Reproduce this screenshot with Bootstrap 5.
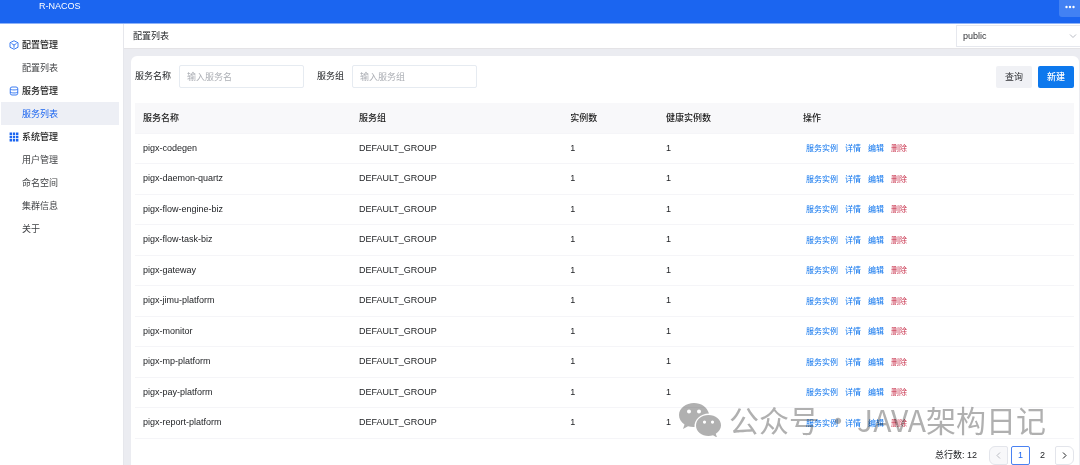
<!DOCTYPE html>
<html lang="zh-CN">
<head>
<meta charset="utf-8">
<meta name="viewport" content="width=device-width, initial-scale=1">
<title>R-NACOS</title>
<link href="https://cdn.jsdelivr.net/npm/bootstrap@5.3.0/dist/css/bootstrap.min.css" rel="stylesheet">
<style>
  body { font-family: "Liberation Sans", "Noto Sans CJK SC", sans-serif; font-size: 9px; line-height: 15px; color: #222427; background: #ebecf1; }
  .app { min-height: 100vh; }
  .topbar { height: 24px; background: #1b65f0; border-bottom: 1px solid #8db2f8; }
  .brand { padding-left: 39px; line-height: 13px; color: #fff; }
  .more-btn { width: 21px; height: 17px; background: #4281f3; border: 0; border-radius: 0 0 0 3px; }
  .more-btn svg { margin-bottom: 3px; }
  .sidebar { width: 123px; background: #fff; padding-top: 9px; }
  .sidebar .nav-link { height: 23px; padding: 1px 0 0 21px; margin: 0 4px 0 1px; color: #404245; display: flex; align-items: center; }
  .sidebar .group-title { height: 23px; padding: 1px 0 0 9px; color: #1c1c1c; gap: 3px; font-weight: 500; }
  .sidebar .nav-link.active { background: #edeff5; color: #1b65f0; }
  .content-area { min-width: 0; border-left: 1px solid #e6e7ec; }
  .titlebar { height: 25px; background: #fff; padding-left: 9px; border-bottom: 1px solid #e4e3e6; }
  .ns-select { width: 124px; height: 22px; padding: 0 0 0 6px; font-size: 9px; line-height: 20px; border: 1px solid #e6e8ee; border-right: 0; border-radius: 0; color: #303236; background-size: 8px; background-position: right 3px center; background-image: url("data:image/svg+xml,%3Csvg xmlns='http://www.w3.org/2000/svg' viewBox='0 0 16 16'%3E%3Cpath fill='none' stroke='%23b9bcc4' stroke-width='2' d='M2 5l6 6 6-6'/%3E%3C/svg%3E"); }
  .panel { background: #fff; margin: 7px 1px 0 7px; padding: 9px 5px 0 4px; border-radius: 6px 6px 0 0; }
  .filter-input { width: 125px; height: 23px; padding: 0 7px; font-size: 9px; border: 1px solid #e6ebf1; border-radius: 2px; }
  .filter-input::placeholder { color: #acafb5; opacity: 1; }
  .filter-second { margin-left: 13px; }
  .tool-group { gap: 6px; }
  .tool-btn { width: 36px; height: 22px; padding: 0; font-size: 9px; line-height: 20px; border-radius: 2px; }
  .btn-query { background: #f0f1f5; color: #303236; }
  .btn-create { background: #0d78ed; color: #fff; font-weight: 500; }
  .service-table { margin: 15px 0 0; table-layout: fixed; color: #222427; }
  .service-table th, .service-table td { height: 30px; padding: 0 8px; vertical-align: middle; border-bottom: 1px solid #f5f5f8; color: inherit; }
  .service-table tbody tr:nth-child(even) td { height: 31px; }
  .service-table th { padding-top: 2px; background: #f8f8fa; font-weight: 500; color: #1c1c1c; }
  .c-name { width: 23%; } .c-group { width: 22.5%; } .c-num { width: 10.2%; } .c-ok { width: 14.6%; }
  .row-actions { gap: 7px; padding: 2px 0 0 3px; font-size: 8px; line-height: 14px; }
  .row-actions a { color: #0d74ee; text-decoration: none; white-space: nowrap; }
  .row-actions a.del { color: #c9344e; }
  .pager { padding-top: 7px; gap: 12px; }
  .pager-list { gap: 4px; }
  .pager .page-link { width: 19px; height: 19px; margin: 0; padding: 0; font-size: 9px; line-height: 17px; display: flex; align-items: center; justify-content: center; border: 1px solid transparent; border-radius: 2px; color: #222427; background: none; }
  .pager .page-item.boxed .page-link { border-color: #e3e5eb; }
  .pager .page-item.disabled .page-link { background: #f8f8fa; color: #babcc2; }
  .pager .page-item.active .page-link { border-color: #4a82f2; color: #1b65f0; }
  .watermark { position: absolute; right: 28px; bottom: 2px; color: #b0b0b0; font-family: "Noto Sans CJK SC", sans-serif; font-size: 30px; line-height: 36px; pointer-events: none; mix-blend-mode: multiply; white-space: nowrap; }
  .dot { width: 38px; text-align: center; }
</style>
</head>
<body>
<div class="app d-flex flex-column">
  <header class="topbar d-flex justify-content-between align-items-start flex-shrink-0">
    <div class="brand">R-NACOS</div>
    <button type="button" class="more-btn d-flex align-items-center justify-content-center p-0" aria-label="更多">
      <svg width="10" height="4" viewBox="0 0 10 4" fill="#fff"><circle cx="1.500" cy="2" r="1.200"/><circle cx="5" cy="2" r="1.200"/><circle cx="8.500" cy="2" r="1.200"/></svg>
    </button>
  </header>
  <div class="d-flex flex-grow-1">
    <nav class="sidebar flex-shrink-0 nav flex-column">
      <div class="group-title d-flex align-items-center">
        <svg width="10" height="10" viewBox="0 0 20 20" fill="none" stroke="#1b65f0" stroke-width="1.700" stroke-linejoin="round"><path d="M10 1.500 18 5.500v9L10 18.500 2 14.500v-9z"/><path d="M5 7l5 3 5-3M10 10v5.500"/></svg>配置管理
      </div>
      <a class="nav-link" href="#">配置列表</a>
      <div class="group-title d-flex align-items-center">
        <svg width="10" height="10" viewBox="0 0 20 20" fill="none" stroke="#1b65f0" stroke-width="1.700"><rect x="2.500" y="2" width="15" height="16" rx="3.500"/><path d="M2.500 6c1 2.500 14 2.500 15 0M2.500 12c1 2.500 14 2.500 15 0"/></svg>服务管理
      </div>
      <a class="nav-link active" href="#">服务列表</a>
      <div class="group-title d-flex align-items-center">
        <svg width="10" height="10" viewBox="0 0 10 10" fill="#1b65f0"><path d="M.6.600h2.400v2.400H.6zM3.800.600h2.400v2.400H3.800zM7 .6h2.400v2.400H7zM.6 3.800h2.400v2.400H.6zM3.800 3.800h2.400v2.400H3.800zM7 3.800h2.400v2.400H7zM.6 7h2.400v2.400H.6zM3.800 7h2.400v2.400H3.800zM7 7h2.400v2.400H7z"/></svg>系统管理
      </div>
      <a class="nav-link" href="#">用户管理</a>
      <a class="nav-link" href="#">命名空间</a>
      <a class="nav-link" href="#">集群信息</a>
      <a class="nav-link" href="#">关于</a>
    </nav>
    <main class="content-area flex-grow-1 d-flex flex-column">
      <div class="titlebar d-flex align-items-center justify-content-between flex-shrink-0">
        <div>配置列表</div>
        <select class="form-select ns-select" aria-label="命名空间"><option>public</option></select>
      </div>
      <section class="panel flex-grow-1">
        <form class="d-flex align-items-center">
          <label for="svc">服务名称</label>
          <input id="svc" class="form-control filter-input ms-2" placeholder="输入服务名">
          <label for="grp" class="filter-second">服务组</label>
          <input id="grp" class="form-control filter-input ms-2" placeholder="输入服务组">
          <div class="ms-auto d-flex tool-group">
            <button type="button" class="btn tool-btn btn-query">查询</button>
            <button type="button" class="btn tool-btn btn-create">新建</button>
          </div>
        </form>
        <div class="position-relative">
          <table class="table service-table">
            <colgroup><col class="c-name"><col class="c-group"><col class="c-num"><col class="c-ok"><col></colgroup>
            <thead><tr><th>服务名称</th><th>服务组</th><th>实例数</th><th>健康实例数</th><th>操作</th></tr></thead>
            <tbody id="rows"></tbody>
          </table>
          <div class="watermark d-flex align-items-center" aria-hidden="true">
            <svg width="42" height="36" viewBox="0 0 42 36" fill="#b0b0b0"><path fill-rule="evenodd" d="M15 2C7 2 0 7 0 14c0 4 2 7 5.500 9.500L4 28l5-2.700c2 .6 4 .9 6.500.8C15 19 21 12.500 30 12.500 28 6 22 2 15 2zM10 8.500a2 2 0 1 1 0 4 2 2 0 0 1 0-4zm10 0a2 2 0 1 1 0 4 2 2 0 0 1 0-4z"/><path fill-rule="evenodd" d="M29.500 14C22.500 14 17 18.500 17 24.500S22.500 35 29.500 35c1.500 0 3-.3 4.500-.7l4 2.200-1.200-3.800C40 30.500 42 27.500 42 24.500 42 18.500 36.500 14 29.500 14zM25.500 19.500a1.600 1.600 0 1 1 0 3.200 1.600 1.600 0 0 1 0-3.200zm8 0a1.600 1.600 0 1 1 0 3.200 1.600 1.600 0 0 1 0-3.200z"/></svg>
            <span class="ms-2">公众号</span><span class="dot">·</span><span>JAVA架构日记</span>
          </div>
        </div>
        <div class="d-flex justify-content-end align-items-center pager">
          <span>总行数: 12</span>
          <ul class="pagination m-0 pager-list">
            <li class="page-item boxed disabled"><a class="page-link" href="#" aria-label="上一页"><svg width="7" height="9" viewBox="0 0 7 9" fill="none" stroke="currentColor"><path d="M5 1.500 2 4.500l3 3"/></svg></a></li>
            <li class="page-item active"><a class="page-link" href="#">1</a></li>
            <li class="page-item"><a class="page-link" href="#">2</a></li>
            <li class="page-item boxed"><a class="page-link" href="#" aria-label="下一页"><svg width="7" height="9" viewBox="0 0 7 9" fill="none" stroke="currentColor"><path d="M2 1.500l3 3-3 3"/></svg></a></li>
          </ul>
        </div>
      </section>
    </main>
  </div>
</div>
<script src="https://cdn.jsdelivr.net/npm/bootstrap@5.3.0/dist/js/bootstrap.bundle.min.js"></script>
<script>
  const services = ['pigx-codegen', 'pigx-daemon-quartz', 'pigx-flow-engine-biz', 'pigx-flow-task-biz', 'pigx-gateway', 'pigx-jimu-platform', 'pigx-monitor', 'pigx-mp-platform', 'pigx-pay-platform', 'pigx-report-platform'];
  document.getElementById('rows').innerHTML = services.map(name => `<tr><td>${name}</td><td>DEFAULT_GROUP</td><td>1</td><td>1</td><td><div class="row-actions d-flex"><a href="#">服务实例</a><a href="#">详情</a><a href="#">编辑</a><a href="#" class="del">删除</a></div></td></tr>`).join('');
</script>
</body>
</html>
